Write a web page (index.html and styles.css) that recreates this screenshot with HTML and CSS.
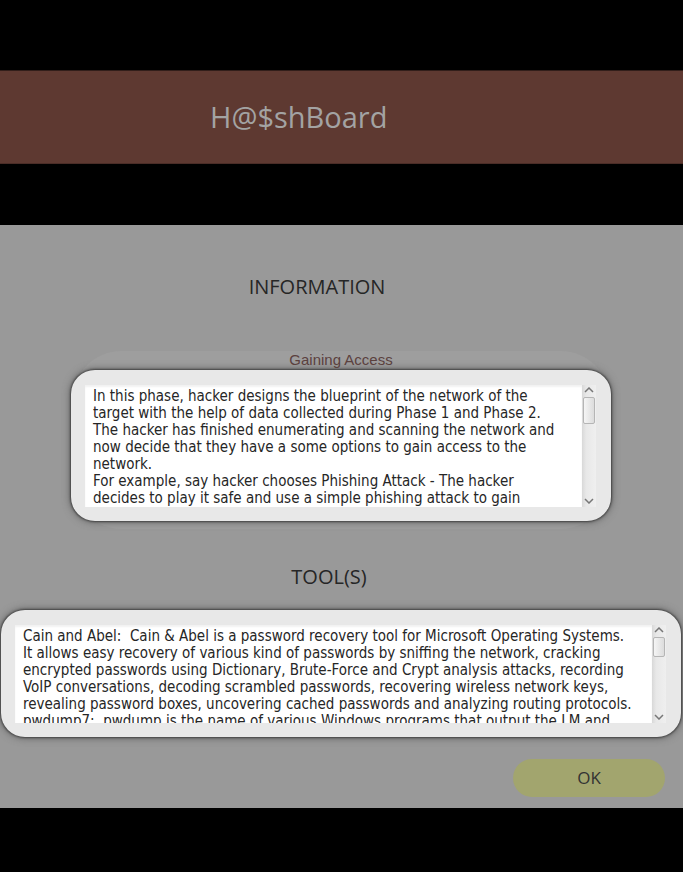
FILE: index.html
```html
<!DOCTYPE html>
<html lang="en">
<head>
<meta charset="utf-8">
<meta name="viewport" content="width=device-width, initial-scale=1">
<title>H@$shBoard</title>
<link rel="stylesheet" href="styles.css">
</head>
<body>
<header class="banner"><h1 class="brand">H@$shBoard</h1></header>
<main class="content">
  <h2 class="heading heading-info">INFORMATION</h2>
  <section class="phase">
    <label class="phase-name" for="info">Gaining Access</label>
    <div class="panel">
      <textarea class="text" id="info" rows="7" wrap="off" readonly>In this phase, hacker designs the blueprint of the network of the
target with the help of data collected during Phase 1 and Phase 2.
The hacker has finished enumerating and scanning the network and
now decide that they have a some options to gain access to the
network.
For example, say hacker chooses Phishing Attack - The hacker
decides to play it safe and use a simple phishing attack to gain</textarea>
      <div class="scrollbar" aria-hidden="true">
        <svg class="arrow" viewBox="0 0 10 6"><path d="M1 5L5 1L9 5"/></svg>
        <div class="thumb"></div>
        <svg class="arrow arrow-down" viewBox="0 0 10 6"><path d="M1 1L5 5L9 1"/></svg>
      </div>
    </div>
  </section>
  <h2 class="heading heading-tools"><label for="tools">TOOL(S)</label></h2>
  <div class="panel panel-tools">
    <textarea class="text" id="tools" rows="6" wrap="off" readonly>Cain and Abel:  Cain &amp; Abel is a password recovery tool for Microsoft Operating Systems.
It allows easy recovery of various kind of passwords by sniffing the network, cracking
encrypted passwords using Dictionary, Brute-Force and Crypt analysis attacks, recording
VoIP conversations, decoding scrambled passwords, recovering wireless network keys,
revealing password boxes, uncovering cached passwords and analyzing routing protocols.
pwdump7:  pwdump is the name of various Windows programs that output the LM and</textarea>
    <div class="scrollbar" aria-hidden="true">
      <svg class="arrow" viewBox="0 0 10 6"><path d="M1 5L5 1L9 5"/></svg>
      <div class="thumb thumb-short"></div>
      <svg class="arrow arrow-down" viewBox="0 0 10 6"><path d="M1 1L5 5L9 1"/></svg>
    </div>
  </div>
  <div class="actions"><button class="ok" type="button">OK</button></div>
</main>
</body>
</html>
```
FILE: styles.css
```css
* { box-sizing: border-box; }
body {
  margin: 0;
  padding: 70px 0 64px;
  background: #000;
  font-family: "Open Sans", "Noto Sans", sans-serif;
}
.banner {
  padding: 24px 0 24px 210px;
  margin-bottom: 61px;
  background: #5e3931;
  border-top: 1px solid #321e1a;
  border-bottom: 1px solid #4b2d27;
}
.brand {
  margin: 0;
  color: #a3a3a3;
  font-size: 29px;
  font-weight: 400;
  line-height: 44px;
}
.content {
  padding: 48px 2px 11px 1px;
  background: #999;
}
.heading {
  margin: 0;
  color: #262626;
  font-size: 20px;
  font-weight: 400;
  line-height: 28px;
  text-align: center;
}
.heading-info { padding-right: 48px; }
.heading-tools { padding-right: 24px; }
.phase {
  margin: 50px 72px 34px;
  padding-bottom: 8px;
  background: #9e9e9e;
  border-radius: 48px;
}
.phase-name {
  display: block;
  color: #5b413e;
  font: 15px/18px "Liberation Sans", Arial, sans-serif;
  padding-bottom: 1px;
  text-align: center;
}
.phase .panel { margin: 0 -2px; }
.panel {
  display: flex;
  padding: 15px 15px 14px 14px;
  background: #e8e8e8;
  border-radius: 24px;
  box-shadow: 0 0 2px 1px #444, 0 0 8px #555;
}
.panel-tools { margin-top: 19px; }
.text {
  flex: 1;
  min-width: 0;
  height: 122px;
  margin: 0;
  padding: 3px 8px 0;
  border: 0;
  outline: 0;
  overflow: hidden;
  resize: none;
  background: #fff;
  color: #262626;
  box-shadow: inset 0 2px 2px #f2f2f2;
  font: 15px/17px "DejaVu Sans Condensed", "DejaVu Sans", Tahoma, sans-serif;
  white-space: pre;
}
.panel-tools .text { height: 98px; }
.scrollbar {
  display: flex;
  flex-direction: column;
  align-items: center;
  width: 14px;
  padding: 2px 0 3px;
  background: linear-gradient(90deg, #d8d8d8, #e8e8e8 30%, #efefef);
}
.arrow {
  width: 10px;
  height: 6px;
  fill: none;
  stroke: #777;
  stroke-width: 1.5;
}
.arrow-down { margin-top: auto; }
.thumb {
  width: 12px;
  height: 27px;
  margin-top: 4px;
  border: 1px solid #b5b5b5;
  border-radius: 2px;
  background: linear-gradient(90deg, #f5f5f5, #dcdcdc);
}
.thumb-short { height: 20px; }
.actions {
  display: flex;
  justify-content: flex-end;
  padding: 22px 16px 0 0;
}
.ok {
  width: 152px;
  height: 38px;
  padding: 0;
  border: 0;
  border-radius: 19px;
  background: #a2a56e;
  color: #333;
  font: 17px/24px "Open Sans", "Noto Sans", sans-serif;
}
```
